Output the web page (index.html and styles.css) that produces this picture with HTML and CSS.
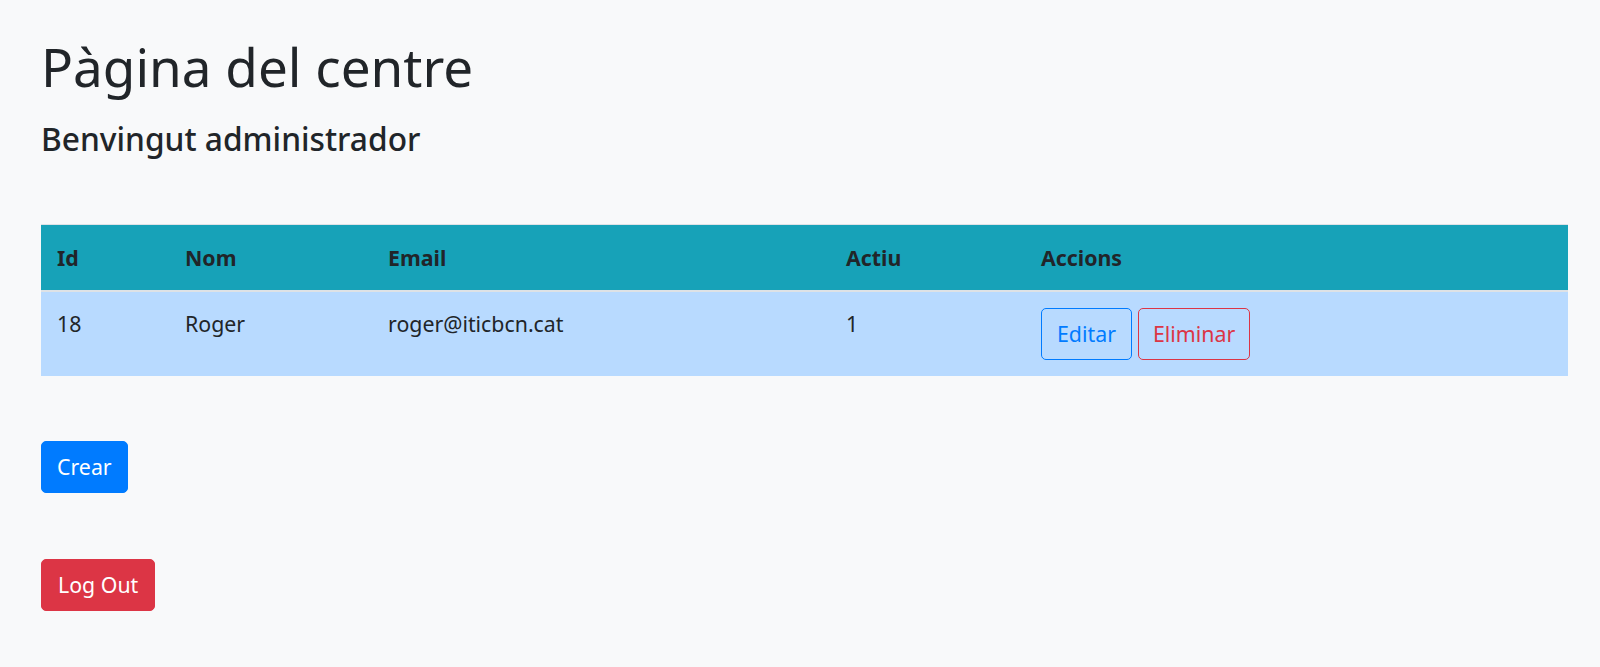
FILE: index.html
```html
<!DOCTYPE html>
<html lang="ca">
<head>
<meta charset="utf-8">
<title>Pàgina del centre</title>
<link rel="stylesheet" href="styles.css">
</head>
<body class="page">
<main class="container">
  <h1 class="title">Pàgina del centre</h1>
  <h3 class="subtitle">Benvingut administrador</h3>
  <table class="table">
    <thead class="table-head">
      <tr>
        <th class="col-id">Id</th>
        <th class="col-nom">Nom</th>
        <th class="col-email">Email</th>
        <th class="col-actiu">Actiu</th>
        <th class="col-accions">Accions</th>
      </tr>
    </thead>
    <tbody>
      <tr class="row-primary">
        <td>18</td>
        <td>Roger</td>
        <td>roger@iticbcn.cat</td>
        <td>1</td>
        <td class="cell-actions"><a class="btn btn-outline-primary" href="#">Editar</a><a class="btn btn-outline-danger" href="#">Eliminar</a></td>
      </tr>
    </tbody>
  </table>
  <div class="block block-create"><a class="btn btn-primary" href="#">Crear</a></div>
  <div class="block block-logout"><a class="btn btn-danger" href="#">Log Out</a></div>
</main>
</body>
</html>
```

FILE: styles.css
```css
* { box-sizing: border-box; }
html, body { margin: 0; }
.page {
  background: #f8f9fa;
  color: #212529;
  font-family: "Noto Sans", "Open Sans", sans-serif;
  font-size: 21.33px;
  line-height: 1.5;
}
.container {
  padding: 35px 32px 40px 41px;
  display: flex;
  flex-direction: column;
  align-items: flex-start;
}
.title {
  font-size: 53px;
  font-weight: 400;
  line-height: 1.2;
  margin: 0 0 21px 0;
}
.subtitle {
  font-size: 31.7px;
  font-weight: 500;
  line-height: 1.2;
  margin: 0 0 66px 0;
}
.table {
  width: 100%;
  border-collapse: collapse;
  table-layout: fixed;
}
.table th, .table td {
  padding: 16px;
  text-align: left;
  vertical-align: top;
}
.table-head th {
  background: #17a2b8;
  font-weight: 700;
  vertical-align: bottom;
  padding-top: 17px;
  border-top: 1px solid #dee2e6;
  border-bottom: 2px solid #dee2e6;
}
.col-id { width: 128px; }
.col-nom { width: 203px; }
.col-email { width: 458px; }
.col-actiu { width: 195px; }
.row-primary td { background: #b8daff; }
.cell-actions { display: flex; gap: 6px; }
.btn {
  display: inline-block;
  padding: 9px 16px;
  font-size: 21.33px;
  line-height: 32px;
  border: 1px solid transparent;
  border-radius: 5px;
  text-decoration: none;
}
.btn-outline-primary { color: #007bff; border-color: #007bff; padding: 9px 15px; }
.btn-outline-danger { color: #dc3545; border-color: #dc3545; padding: 9px 14px; }
.btn-primary { background: #007bff; color: #fff; border-color: #007bff; padding: 9px 15px; }
.btn-danger { background: #dc3545; color: #fff; border-color: #dc3545; }
.block-create { margin-top: 65px; }
.block-logout { margin-top: 66px; }
```
